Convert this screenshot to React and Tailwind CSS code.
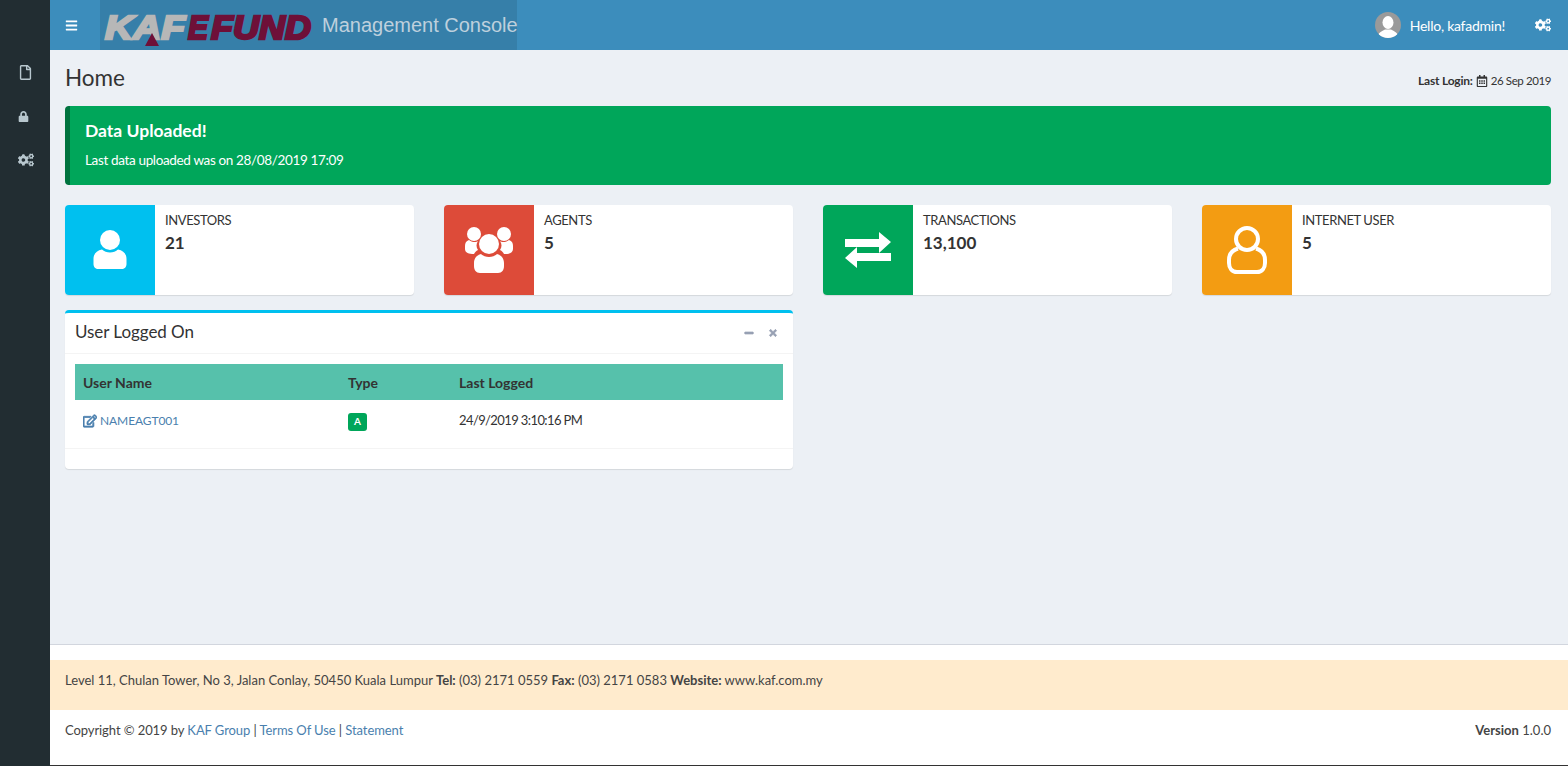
import { FaBars, FaCogs, FaLock, FaMinus, FaRegCalendarAlt, FaRegEdit, FaRegFile, FaTimes } from 'react-icons/fa';

function PersonIcon() {
    return (
        <svg width="34" height="40" viewBox="0 0 34 40" fill="#fff">
            <circle cx="17" cy="10" r="10" />
            <path d="M9 19.500c2 2 5 3 8 3s6-1 8-3c5 1 8.500 4 8.500 9.500v5c0 3-2 5-5 5h-23c-3 0-5-2-5-5v-5c0-5.500 3.500-8.500 8.500-9.500z" />
        </svg>
    );
}

function GroupIcon() {
    return (
        <svg width="50" height="46" viewBox="0 0 50 46" fill="#fff">
            <circle cx="10" cy="7" r="7" />
            <circle cx="40" cy="7" r="7" />
            <path d="M5 13c2 2 7 3 9 1-2 3-2 6 0 9-2 1-3 2-4 4-5 0-9-1-9-5v-3c0-3 1-5 4-6z" />
            <path d="M45 13c-2 2-7 3-9 1 2 3 2 6 0 9 2 1 3 2 4 4 5 0 9-1 9-5v-3c0-3-1-5-4-6z" />
            <circle cx="25" cy="17" r="10" />
            <path d="M17 27c2 2 5 3 8 3s6-1 8-3c4 1 7 4 7 9v3c0 4-2 7-6 7h-18c-4 0-6-3-6-7v-3c0-5 3-8 7-9z" />
        </svg>
    );
}

function SwapIcon() {
    return (
        <svg width="46" height="36" viewBox="0 0 46 36" fill="#fff">
            <path d="M0 7h34V0l12 10-12 11v-6H0z" />
            <path d="M46 21H12v-6L0 26l12 10v-7h34z" />
        </svg>
    );
}

function PersonOutlineIcon() {
    return (
        <svg width="40" height="48" viewBox="0 0 40 48" fill="none" stroke="#fff" strokeWidth="4">
            <circle cx="20" cy="13" r="11" />
            <path d="M11 22.500c-5 1.500-9 5-9 11.500v3c0 5 3 9 8 9h20c5 0 8-4 8-9v-3c0-6.500-4-10-9-11.500" />
        </svg>
    );
}

function Avatar() {
    return (
        <svg width="26" height="26" viewBox="0 0 26 26" className="rounded-full">
            <rect width="26" height="26" fill="#9a9a9a" />
            <ellipse cx="13" cy="10.500" rx="5.500" ry="6.500" fill="#fff" />
            <path d="M2 26c1-6 6-7 8-8.500h6c2 1.500 7 2.500 8 8.500z" fill="#fff" />
        </svg>
    );
}

function Logo() {
    const font = { fontFamily: "'Liberation Sans', sans-serif", fontSize: 34, fontWeight: 700, fontStyle: 'italic' };
    return (
        <svg width="216" height="44" viewBox="0 0 216 44" className="shrink-0">
            <text x="5" y="36" textLength="80" lengthAdjust="spacingAndGlyphs" fill="#b7b7b7" stroke="#b7b7b7" strokeWidth="2.500" {...font}>KAF</text>
            <line x1="32" y1="24" x2="41" y2="10" stroke="#367fa9" strokeWidth="1.500" />
            <polygon points="52,30 45,43 59,43" fill="#6e1038" />
            <text x="88" y="36" textLength="20" lengthAdjust="spacingAndGlyphs" fill="#6e1038" stroke="#6e1038" strokeWidth="2.500" {...font}>E</text>
            <text x="111" y="36" textLength="100" lengthAdjust="spacingAndGlyphs" fill="#6e1038" stroke="#6e1038" strokeWidth="2.500" {...font}>FUND</text>
        </svg>
    );
}

function InfoBox({ color, icon, label, value }) {
    return (
        <div className="flex h-[90px] bg-white rounded-sm shadow-[0_1px_1px_rgba(0,0,0,0.1)]">
            <div className={`w-[90px] flex items-center justify-center rounded-l-sm ${color}`}>{icon}</div>
            <div className="px-[10px] py-[5px]">
                <div className="text-[13px] leading-5 uppercase tracking-[-0.4px] text-[#333]">{label}</div>
                <div className="text-[17px] leading-[26px] font-bold text-[#333]">{value}</div>
            </div>
        </div>
    );
}

const cards = [
    { color: 'bg-[#00c0ef]', icon: <PersonIcon />, label: 'Investors', value: '21' },
    { color: 'bg-[#dd4b39]', icon: <GroupIcon />, label: 'Agents', value: '5' },
    { color: 'bg-[#00a65a]', icon: <SwapIcon />, label: 'Transactions', value: '13,100' },
    { color: 'bg-[#f39c12]', icon: <PersonOutlineIcon />, label: 'Internet User', value: '5' },
];

export default function App() {
    return (
        <div className="flex h-screen overflow-hidden bg-white font-['Lato',sans-serif] text-[14px] text-[#333]">
            {/* sidebar */}
            <aside className="w-[50px] shrink-0 bg-[#222d32] pt-[50px] text-[#b8c7ce]">
                <div className="h-11 flex items-center pl-[18px]"><FaRegFile size={15} /></div>
                <div className="h-11 flex items-center pl-[18px]"><FaLock size={11} /></div>
                <div className="h-11 flex items-center pl-[18px]"><FaCogs size={16} /></div>
            </aside>

            <div className="flex-1 min-w-0 flex flex-col">
                <header className="h-[50px] shrink-0 flex items-center bg-[#3c8dbc] text-white">
                    <div className="w-[50px] pl-[15px]"><FaBars size={13} /></div>
                    <div className="h-full w-[417px] flex items-center gap-[6px] bg-[#367fa9]">
                        <Logo />
                        <span className="font-['Liberation_Sans',sans-serif] text-[20px] text-[#bed0dd] whitespace-nowrap">Management Console</span>
                    </div>
                    <div className="ml-auto flex items-center pr-[17px]">
                        <Avatar />
                        <span className="ml-[9px] tracking-[-0.25px]">Hello, kafadmin!</span>
                        <FaCogs size={16} className="ml-[30px]" />
                    </div>
                </header>

                <main className="flex-1 bg-[#ecf0f5] pl-[15px] pr-[17px] border-b border-[#d2d6de]">
                    <div className="h-[56px] flex items-center justify-between">
                        <h1 className="text-[22.500px] leading-[30px] text-[#333]">Home</h1>
                        <div className="text-[12px] flex items-center gap-[3px] pt-[6px]">
                            <b className="tracking-[-0.2px]">Last Login:</b>
                            <FaRegCalendarAlt size={12} />
                            <span className="text-[11.500px] tracking-[-0.4px]">26 Sep 2019</span>
                        </div>
                    </div>

                    <div className="h-[79px] flex flex-col justify-center bg-[#00a65a] border-l-[5px] border-[#00733e] rounded pl-[15px] text-white">
                        <h4 className="text-[17.500px] leading-[20px] font-bold">Data Uploaded!</h4>
                        <p className="mt-[9px] mb-[1px] leading-5 text-[13.500px] tracking-[-0.35px]">Last data uploaded was on 28/08/2019 17:09</p>
                    </div>

                    <div className="grid grid-cols-4 gap-x-[30px] mt-5">
                        {cards.map((c) => <InfoBox key={c.label} {...c} />)}
                        <section className="col-span-2 mt-[15px] bg-white border-t-[3px] border-[#00c0ef] rounded-sm shadow-[0_1px_1px_rgba(0,0,0,0.1)]">
                            <div className="h-[41px] flex items-center justify-between px-[10px] border-b border-[#f4f4f4]">
                                <h3 className="text-[17px] pb-[2px] tracking-[-0.05px]">User Logged On</h3>
                                <div className="flex items-center gap-[14px] text-[#97a0b3] pr-[5px]">
                                    <FaMinus size={10} stroke="currentColor" strokeWidth={40} />
                                    <FaTimes size={10} stroke="currentColor" strokeWidth={40} />
                                </div>
                            </div>
                            <div className="px-[10px] pt-[10px]">
                                <table className="w-full text-[13px]">
                                    <thead className="bg-[#56c1ab] text-left text-[14px]">
                                        <tr className="h-9">
                                            <th className="w-[265px] pl-2 font-bold">User Name</th>
                                            <th className="w-[111px] pl-2 font-bold">Type</th>
                                            <th className="pl-2 font-bold">Last Logged</th>
                                        </tr>
                                    </thead>
                                    <tbody>
                                        <tr className="h-[48px]">
                                            <td className="pl-2 pb-[6px] text-[12px] tracking-[-0.1px] text-[#4a7fae]">
                                                <span className="flex items-center gap-[3px]"><FaRegEdit size={14} stroke="currentColor" strokeWidth={30} />NAMEAGT001</span>
                                            </td>
                                            <td className="pl-2 pb-[6px]">
                                                <span className="inline-flex items-center justify-center w-[19px] h-[18px] rounded-[3px] bg-[#00a65a] text-white text-[10px] font-bold">A</span>
                                            </td>
                                            <td className="pl-2 pb-[6px] tracking-[-0.6px]">24/9/2019 3:10:16 PM</td>
                                        </tr>
                                    </tbody>
                                </table>
                            </div>
                            <div className="h-[21px] border-t border-[#f4f4f4]" />
                        </section>
                    </div>
                </main>

                <footer className="shrink-0 h-[121px] pt-[15px] text-[13px] border-b border-[#333]">
                    <div className="h-[50px] flex items-center bg-[#ffebcd] pl-[15px] pb-[9px] text-[#444]">
                        <span>Level 11, Chulan Tower, No 3, Jalan Conlay, 50450 Kuala Lumpur <b>Tel:</b> (03) 2171 0559 <b>Fax:</b> (03) 2171 0583 <b>Website:</b> www.kaf.com.my</span>
                    </div>
                    <div className="h-[40px] flex items-center justify-between pl-[15px] pr-[17px] pt-[2px] text-[#444]">
                        <span className="tracking-[-0.08px]">Copyright © 2019 by <span className="text-[#4a7fae]">KAF Group</span> | <span className="text-[#4a7fae]">Terms Of Use</span> | <span className="text-[#4a7fae]">Statement</span></span>
                        <span><b>Version</b> 1.0.0</span>
                    </div>
                </footer>
            </div>
        </div>
    );
}
